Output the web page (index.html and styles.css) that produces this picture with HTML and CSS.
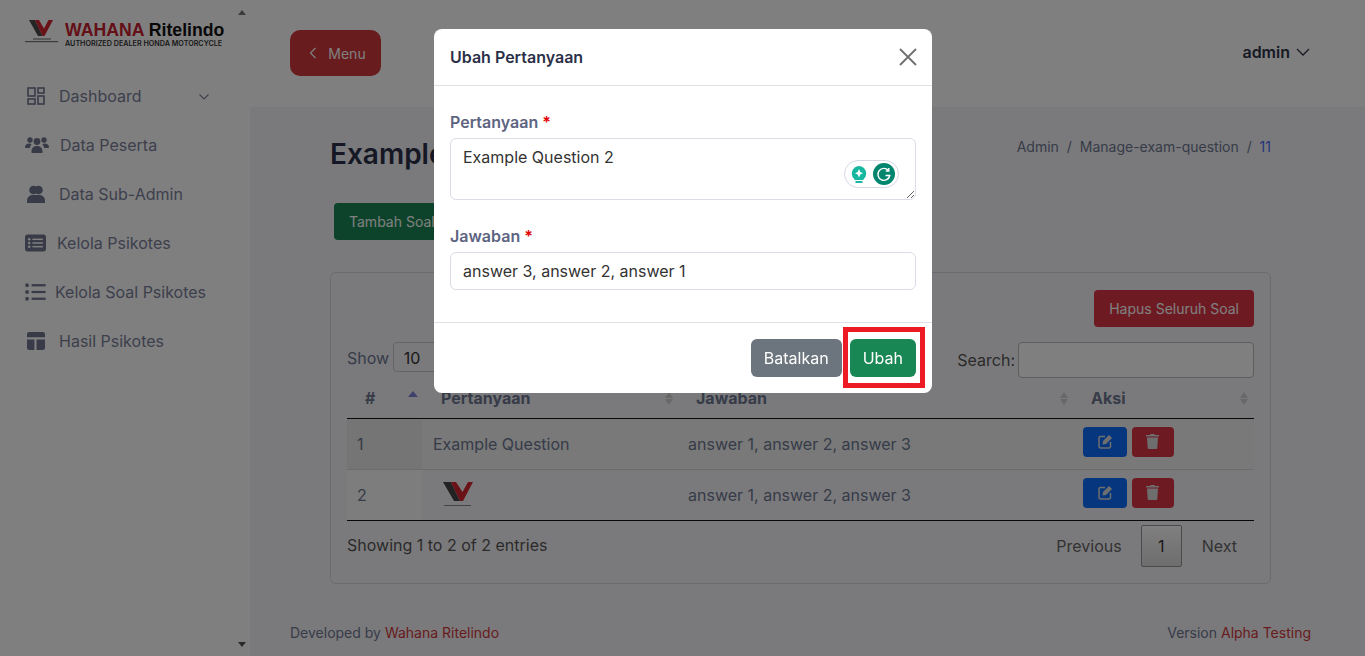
FILE: index.html
```html
<!DOCTYPE html>
<html>
<head>
    <title>Kelola Soal Psikotes</title>
    <link rel="stylesheet" href="styles.css">
</head>
<body>

<aside class="sidebar">
    <div class="brand">
        <svg class="brand-mark" width="33" height="25" viewBox="0 0 33 25">
            <polygon points="4,0 10,0 17.5,16 13,16" fill="#4a4a4a"/>
            <polygon points="10,0 14,0 19,8.5 23.5,0 28,0 19.5,16 17.5,16" fill="#d32430"/>
            <rect x="8" y="18.5" width="18" height="1" fill="#666"/>
            <rect x="0" y="21" width="33" height="1.2" fill="#777"/>
        </svg>
        <div class="brand-text">
            <div class="brand-name"><span class="brand-red">WAHANA</span> Ritelindo</div>
            <div class="brand-sub">AUTHORIZED DEALER HONDA MOTORCYCLE</div>
        </div>
    </div>

    <nav class="nav">
        <a class="nav-item">
            <svg class="nav-icon" viewBox="0 0 18 18" fill="none" stroke="currentColor" stroke-width="1.6">
                <rect x="1" y="1" width="7" height="8"/><rect x="11" y="1" width="6" height="5"/>
                <rect x="1" y="12" width="7" height="5"/><rect x="11" y="9" width="6" height="8"/>
            </svg>
            <span class="nav-label gap-a">Dashboard</span>
            <svg class="nav-caret" width="12" height="8" viewBox="0 0 12 8" fill="none" stroke="currentColor" stroke-width="1.1"><path d="M1.5 1.5 6 6l4.5-4.5"/></svg>
        </a>
        <a class="nav-item">
            <svg class="nav-icon wide" viewBox="0 0 24 18" fill="currentColor">
                <circle cx="5" cy="4" r="2.7"/><circle cx="19" cy="4" r="2.7"/><circle cx="12" cy="5.5" r="3.4"/>
                <path d="M0 11.5C0 8.5 2 7.5 4 7.5c1 0 2 .3 2.6 1-1 1-1.6 2.2-1.6 3.5H.5c-.3 0-.5-.2-.5-.5zM24 11.5c0-3-2-4-4-4-1 0-2 .3-2.6 1 1 1 1.6 2.2 1.6 3.5h4.5c.3 0 .5-.2.5-.5zM6.5 15c0-3 2.5-5 5.5-5s5.5 2 5.5 5v1.5c0 .3-.2.5-.5.5H7c-.3 0-.5-.2-.5-.5z"/>
            </svg>
            <span class="nav-label gap-b">Data Peserta</span>
        </a>
        <a class="nav-item">
            <svg class="nav-icon" viewBox="0 0 18 18" fill="currentColor">
                <circle cx="6.5" cy="5" r="4.3"/><circle cx="11.5" cy="5" r="4.3"/>
                <path d="M0 15.5C0 12 3 10 6 10h6c3 0 6 2 6 5.5V18H0z"/>
            </svg>
            <span class="nav-label gap-a">Data Sub-Admin</span>
        </a>
        <a class="nav-item">
            <svg class="nav-icon wide2" viewBox="0 0 20 16">
                <rect width="20" height="16" rx="2.5" fill="currentColor"/>
                <g fill="#fff"><circle cx="4" cy="4.5" r="1.2"/><circle cx="4" cy="8" r="1.2"/><circle cx="4" cy="11.5" r="1.2"/>
                <rect x="7" y="3.8" width="10" height="1.4"/><rect x="7" y="7.3" width="10" height="1.4"/><rect x="7" y="10.8" width="10" height="1.4"/></g>
            </svg>
            <span class="nav-label gap-c">Kelola Psikotes</span>
        </a>
        <a class="nav-item">
            <svg class="nav-icon wide2" viewBox="0 0 18 16" fill="currentColor">
                <rect x="0" y="0.5" width="3" height="3" rx=".8"/><rect x="0" y="6.5" width="3" height="3" rx=".8"/><rect x="0" y="12.5" width="3" height="3" rx=".8"/>
                <rect x="5.5" y="1" width="12.5" height="2"/><rect x="5.5" y="7" width="12.5" height="2"/><rect x="5.5" y="13" width="12.5" height="2"/>
            </svg>
            <span class="nav-label gap-d">Kelola Soal Psikotes</span>
        </a>
        <a class="nav-item">
            <svg class="nav-icon" viewBox="0 0 17 17" fill="currentColor">
                <path d="M2 0h13a2 2 0 0 1 2 2v3H0V2a2 2 0 0 1 2-2zM0 7h7v10H2a2 2 0 0 1-2-2zM9 7h8v8a2 2 0 0 1-2 2H9z"/>
            </svg>
            <span class="nav-label gap-a">Hasil Psikotes</span>
        </a>
    </nav>
    <span class="scroll-up"></span>
    <span class="scroll-down"></span>
</aside>

<div class="main">
    <header class="topbar">
        <button class="menu-btn">
            <svg width="8" height="12" viewBox="0 0 8 12" fill="none" stroke="currentColor" stroke-width="1.2"><path d="M6.5 1 1.5 6l5 5"/></svg>
            Menu
        </button>
        <div class="user">admin
            <svg width="14" height="8" viewBox="0 0 14 8" fill="none" stroke="currentColor" stroke-width="1.3"><path d="M1 1l6 6 6-6"/></svg>
        </div>
    </header>

    <main class="content">
        <div class="title-row">
            <h1>Example Psikotes</h1>
            <div class="crumbs">Admin <span>/</span> Manage-exam-question <span>/</span> <b>11</b></div>
        </div>

        <button class="btn btn-green add-btn">Tambah Soal</button>

        <section class="card">
            <div class="card-top">
                <button class="btn btn-red">Hapus Seluruh Soal</button>
            </div>
            <div class="tools">
                <div class="show">Show <span class="fake-select">10</span></div>
                <div class="search">Search: <span class="fake-input"></span></div>
            </div>
            <table>
                <thead>
                    <tr>
                        <th class="col-no">#<i class="sort sort-up"></i></th>
                        <th class="col-q">Pertanyaan<i class="sort"></i></th>
                        <th class="col-a">Jawaban<i class="sort"></i></th>
                        <th class="col-act">Aksi<i class="sort"></i></th>
                    </tr>
                </thead>
                <tbody>
                    <tr class="odd">
                        <td class="sorted">1</td>
                        <td>Example Question</td>
                        <td>answer 1, answer 2, answer 3</td>
                        <td class="actions">
                            <button class="act act-edit"><svg width="15" height="15" viewBox="0 0 15 15" fill="none" stroke="currentColor" stroke-width="1.5"><path d="M7 2.5H2.5A1.5 1.5 0 0 0 1 4v8.5A1.5 1.5 0 0 0 2.5 14H11a1.5 1.5 0 0 0 1.5-1.5V8"/><path d="M5 7 11 1l3 3-6 6-3.5.5z" fill="currentColor" stroke="none"/></svg></button>
                            <button class="act act-del"><svg width="13" height="15" viewBox="0 0 13 15" fill="currentColor"><path d="M4.5 0h4l.5 1h4v1.5H0V1h4zM1 3.5h11l-.7 10.500a1 1 0 0 1-1 1H2.700a1 1 0 0 1-1-1z"/></svg></button>
                        </td>
                    </tr>
                    <tr>
                        <td class="sorted-even">2</td>
                        <td>
                            <svg class="cell-logo" width="30" height="26" viewBox="0 0 30 26">
                                <polygon points="0,0 8,0 17,19 11,19" fill="#444"/>
                                <polygon points="8,0 13,0 19.5,10 25,0 30,0 20,19 17,19" fill="#d32430"/>
                                <rect x="1" y="23" width="27" height="1" fill="#888"/>
                            </svg>
                        </td>
                        <td>answer 1, answer 2, answer 3</td>
                        <td class="actions">
                            <button class="act act-edit"><svg width="15" height="15" viewBox="0 0 15 15" fill="none" stroke="currentColor" stroke-width="1.5"><path d="M7 2.5H2.5A1.5 1.5 0 0 0 1 4v8.5A1.5 1.5 0 0 0 2.5 14H11a1.5 1.5 0 0 0 1.5-1.5V8"/><path d="M5 7 11 1l3 3-6 6-3.5.5z" fill="currentColor" stroke="none"/></svg></button>
                            <button class="act act-del"><svg width="13" height="15" viewBox="0 0 13 15" fill="currentColor"><path d="M4.5 0h4l.5 1h4v1.5H0V1h4zM1 3.5h11l-.7 10.500a1 1 0 0 1-1 1H2.700a1 1 0 0 1-1-1z"/></svg></button>
                        </td>
                    </tr>
                </tbody>
            </table>
            <div class="table-foot">
                <div class="entries">Showing 1 to 2 of 2 entries</div>
                <div class="pager">
                    <span>Previous</span>
                    <span class="page-on">1</span>
                    <span class="page-next">Next</span>
                </div>
            </div>
        </section>
    </main>

    <footer class="page-foot">
        <div>Developed by <a>Wahana Ritelindo</a></div>
        <div>Version <a>Alpha Testing</a></div>
    </footer>
</div>

<!-- modal with backdrop -->
<div class="backdrop">
    <div class="modal">
        <div class="modal-head">
            <h5>Ubah Pertanyaan</h5>
            <svg width="18" height="18" viewBox="0 0 18 18" stroke="#6f6f6f" stroke-width="1.8"><path d="M1 1l16 16M17 1 1 17"/></svg>
        </div>
        <div class="modal-body">
            <label>Pertanyaan <em>*</em></label>
            <div class="area-wrap">
                <textarea>Example Question 2</textarea>
                <div class="grammarly">
                    <svg width="16" height="17" viewBox="0 0 16 17">
                        <path d="M8 0a7.5 7.5 0 0 1 4.5 13.2V14h-9v-.8A7.5 7.5 0 0 1 8 0z" fill="#15b79e"/>
                        <rect x="4.5" y="15" width="7" height="2" fill="#15b79e"/>
                        <path d="M8 3 9.3 6 12 7.2 9.3 8.4 8 11.5 6.700 8.400 4 7.200 6.700 6z" fill="#fff"/>
                    </svg>
                    <svg width="22" height="22" viewBox="0 0 22 22">
                        <circle cx="11" cy="11" r="11" fill="#00856f"/>
                        <path d="M15.5 7.5A6 6 0 1 0 16.8 12.5H12.5" fill="none" stroke="#fff" stroke-width="1.4"/>
                        <path d="M15.8 5v3h-3" fill="none" stroke="#fff" stroke-width="1.4"/>
                    </svg>
                </div>
            </div>
            <label class="second">Jawaban <em>*</em></label>
            <input type="text" value="answer 3, answer 2, answer 1">
        </div>
        <div class="modal-foot">
            <button class="btn-modal btn-grey">Batalkan</button>
            <button class="btn-modal btn-ok">Ubah</button>
            <span class="highlight"></span>
        </div>
    </div>
</div>

</body>
</html>
```

FILE: styles.css
```css
/* Base */
body {
    font-family: 'Inter', 'Liberation Sans', sans-serif;
    margin: 0;
    padding: 0;
    height: 656px;
    overflow: hidden;
    display: flex;
    background: #f5f5f9;
    color: #6e7891;
    font-size: 16px;
}

button {
    font-family: inherit;
    border: none;
}

/* Sidebar */
.sidebar {
    width: 250px;
    flex-shrink: 0;
    background: #fff;
    position: relative;
    color: #7a8099;
}

.brand {
    display: flex;
    gap: 7px;
    padding: 20px 0 0 25px;
    height: 43px;
}

.brand-mark {
    flex-shrink: 0;
}

.brand-name {
    font-family: 'Liberation Sans', sans-serif;
    font-weight: 700;
    font-size: 19px;
    line-height: 19px;
    height: 19px;
    color: #111;
    white-space: nowrap;
    transform: scaleX(.93);
    transform-origin: left top;
    width: 172px;
}

.brand-red {
    color: #c8202c;
}

.brand-sub {
    font-size: 7.2px;
    font-weight: 600;
    line-height: 9px;
    color: #333;
    white-space: nowrap;
    width: 160px;
}

.nav {
    padding-top: 8px;
}

.nav-item {
    height: 49px;
    display: flex;
    align-items: center;
    padding-left: 27px;
    font-size: 16px;
    position: relative;
}

.nav-icon {
    width: 18px;
    height: 18px;
    color: #70768f;
    flex-shrink: 0;
}

.nav-icon.wide {
    width: 24px;
    margin-left: -2px;
}

.nav-icon.wide2 {
    width: 21px;
    margin-left: -2px;
}

.gap-a { margin-left: 14px; }
.gap-b { margin-left: 11px; }
.gap-c { margin-left: 11px; }
.gap-d { margin-left: 9px; }

.nav-caret {
    position: absolute;
    left: 198px;
    top: 22px;
}

.scroll-up, .scroll-down {
    position: absolute;
    left: 238px;
    width: 0;
    height: 0;
    border-left: 4px solid transparent;
    border-right: 4px solid transparent;
}

.scroll-up {
    top: 10px;
    border-bottom: 5px solid #777;
}

.scroll-down {
    bottom: 9px;
    border-top: 5px solid #555;
}

/* Main area */
.main {
    flex: 1;
    display: flex;
    flex-direction: column;
    min-width: 0;
}

.topbar {
    height: 107px;
    background: #fff;
    flex-shrink: 0;
    display: flex;
    align-items: flex-start;
    justify-content: space-between;
    padding: 30px 55px 0 40px;
    box-sizing: border-box;
}

.menu-btn {
    width: 91px;
    height: 46px;
    padding: 0 0 0 4px;
    border-radius: 10px;
    background: #d2383a;
    color: #fff;
    font-size: 14px;
    display: flex;
    align-items: center;
    justify-content: center;
    gap: 11px;
}

.user {
    margin-top: 12px;
    font-size: 16px;
    font-weight: 600;
    color: #2f3349;
    display: flex;
    align-items: center;
    gap: 6px;
}

.content {
    padding: 0 94px 0 80px;
    flex: 1;
}

.title-row {
    display: flex;
    justify-content: space-between;
    align-items: center;
    padding-top: 28px;
    height: 38px;
}

h1 {
    margin: 0;
    font-size: 28px;
    font-weight: 600;
    color: #2b3048;
}

.crumbs {
    font-size: 14px;
    margin-top: -15px;
    color: #6e7891;
}

.crumbs span {
    margin: 0 4px;
}

.crumbs b {
    font-weight: 400;
    color: #4a6cf7;
}

.btn {
    height: 37px;
    padding: 0 15px;
    border-radius: 4px;
    color: #fff;
    font-size: 14px;
}

.btn-green {
    background: #198754;
}

.btn-red {
    background: #dc3545;
}

.add-btn {
    display: block;
    margin: 30px 0 0 4px;
    width: 160px;
    text-align: left;
}

/* Card + table */
.card {
    margin-top: 32px;
    height: 312px;
    box-sizing: border-box;
    border: 1px solid #d5d7de;
    border-radius: 6px;
    padding: 17px 16px 0;
}

.card-top {
    display: flex;
    justify-content: flex-end;
}

.tools {
    display: flex;
    justify-content: space-between;
    align-items: flex-start;
    margin-top: 15px;
    height: 36px;
}

.fake-select {
    display: inline-block;
    width: 100px;
    height: 30px;
    line-height: 30px;
    padding-left: 10px;
    border: 1px solid #c8c8c8;
    border-radius: 4px;
    color: #333;
    margin-left: -1px;
    box-sizing: border-box;
}

.search {
    display: flex;
    align-items: center;
    gap: 3px;
    color: #555;
}

.fake-input {
    display: block;
    width: 236px;
    height: 36px;
    box-sizing: border-box;
    border: 1px solid #bbb;
    border-radius: 4px;
    background: #fff;
}

table {
    width: 100%;
    border-collapse: collapse;
    table-layout: fixed;
}

th {
    height: 40px;
    text-align: left;
    font-weight: 700;
    font-size: 16px;
    color: #6e7891;
    border-bottom: 1px solid #111;
    position: relative;
    padding: 0 0 0 19px;
    box-sizing: border-box;
}

th.col-no { width: 75px; padding-left: 18px; }
.col-q { width: 255px; }
.col-a { width: 395px; }

.sort {
    position: absolute;
    right: 4px;
    top: 14px;
    width: 0;
    height: 0;
    border-left: 4px solid transparent;
    border-right: 4px solid transparent;
    border-bottom: 6px solid #d0d0d0;
}

.sort::after {
    content: "";
    position: absolute;
    left: -4px;
    top: 7px;
    border-left: 4px solid transparent;
    border-right: 4px solid transparent;
    border-top: 6px solid #d0d0d0;
}

.col-act .sort {
    right: 6px;
}

.sort-up {
    top: 13px;
    border-left-width: 5px;
    border-right-width: 5px;
    border-bottom: 6px solid #7d84d8;
}

.sort-up::after {
    display: none;
}

td {
    height: 51px;
    padding: 0 11px;
    border-bottom: 1px solid #d8d8d8;
    box-sizing: border-box;
}

td.sorted, td.sorted-even {
    padding-left: 10px;
}

tbody tr:last-child td {
    border-bottom: 1px solid #111;
}

.odd td {
    background: #f2f2f2;
}

.odd .sorted {
    background: #eaeaea;
}

.sorted-even {
    background: #fafafa;
}

td.actions {
    padding: 8px 0 0 11px;
    vertical-align: top;
}

.cell-logo {
    display: block;
    margin: 0 0 0 10px;
}

.act {
    height: 30px;
    border-radius: 4px;
    color: #ddd;
    vertical-align: top;
    padding: 0;
    display: inline-flex;
    align-items: center;
    justify-content: center;
}

.act-edit {
    width: 44px;
    background: #0d6efd;
}

.act-del {
    width: 42px;
    background: #dc3545;
}

.table-foot {
    display: flex;
    justify-content: space-between;
    align-items: center;
    margin-top: 4px;
    color: #555;
}

.entries {
    margin-top: -2px;
}

.pager {
    display: flex;
    align-items: center;
    color: #666;
}

.pager span {
    padding: 0 19px;
}

.pager .page-next {
    padding: 0 17px 0 20px;
}

.pager .page-on {
    padding: 0;
    width: 41px;
    height: 42px;
    line-height: 40px;
    text-align: center;
    box-sizing: border-box;
    border: 1px solid #979797;
    border-radius: 2px;
    background: linear-gradient(#fff, #dcdcdc);
    color: #333;
}

/* Footer */
.page-foot {
    display: flex;
    justify-content: space-between;
    font-size: 14px;
    padding: 0 54px 15px 40px;
}

.page-foot a {
    color: #d2383a;
}

/* Modal */
.backdrop {
    position: fixed;
    inset: 0;
    background: rgba(0, 0, 0, 0.5);
}

.modal {
    position: absolute;
    left: 434px;
    top: 29px;
    width: 498px;
    background: #fff;
    border-radius: 8px;
}

.modal-head {
    height: 57px;
    box-sizing: border-box;
    border-bottom: 1px solid #dee2e6;
    display: flex;
    align-items: center;
    justify-content: space-between;
    padding: 0 15px 0 16px;
}

h5 {
    margin: 0;
    font-size: 16px;
    font-weight: 600;
    color: #2b3048;
}

.modal-body {
    padding: 26px 16px 32px;
}

label {
    display: block;
    font-weight: 600;
    font-size: 16px;
    line-height: 20px;
    color: #5d6481;
    margin-bottom: 6px;
}

label.second {
    margin-top: 26px;
}

label em {
    color: #e00000;
    font-style: normal;
}

.area-wrap {
    position: relative;
}

textarea, input {
    display: block;
    width: 100%;
    box-sizing: border-box;
    border: 1px solid #dadce6;
    border-radius: 6px;
    font-family: inherit;
    font-size: 16px;
    color: #333;
    padding: 8px 12px;
    outline: none;
}

textarea {
    height: 62px;
}

input {
    height: 38px;
}

.grammarly {
    position: absolute;
    right: 17px;
    top: 22px;
    width: 55px;
    height: 28px;
    box-sizing: border-box;
    border: 1px solid #d5d9e3;
    border-radius: 14px;
    background: #fff;
    display: flex;
    align-items: center;
    gap: 6px;
    padding-left: 6px;
}

.modal-foot {
    border-top: 1px solid #dee2e6;
    height: 71px;
    box-sizing: border-box;
    display: flex;
    justify-content: flex-end;
    align-items: flex-start;
    gap: 8px;
    padding: 16px 16px 0 0;
    position: relative;
}

.btn-modal {
    height: 38px;
    border-radius: 6px;
    font-size: 16px;
    color: #fff;
    padding: 0 13px;
}

.btn-grey {
    background: #6c757d;
}

.btn-ok {
    background: #198754;
}

.highlight {
    position: absolute;
    left: 409px;
    top: 4px;
    width: 82px;
    height: 61px;
    box-sizing: border-box;
    border: 5px solid #ed1c24;
}
```
